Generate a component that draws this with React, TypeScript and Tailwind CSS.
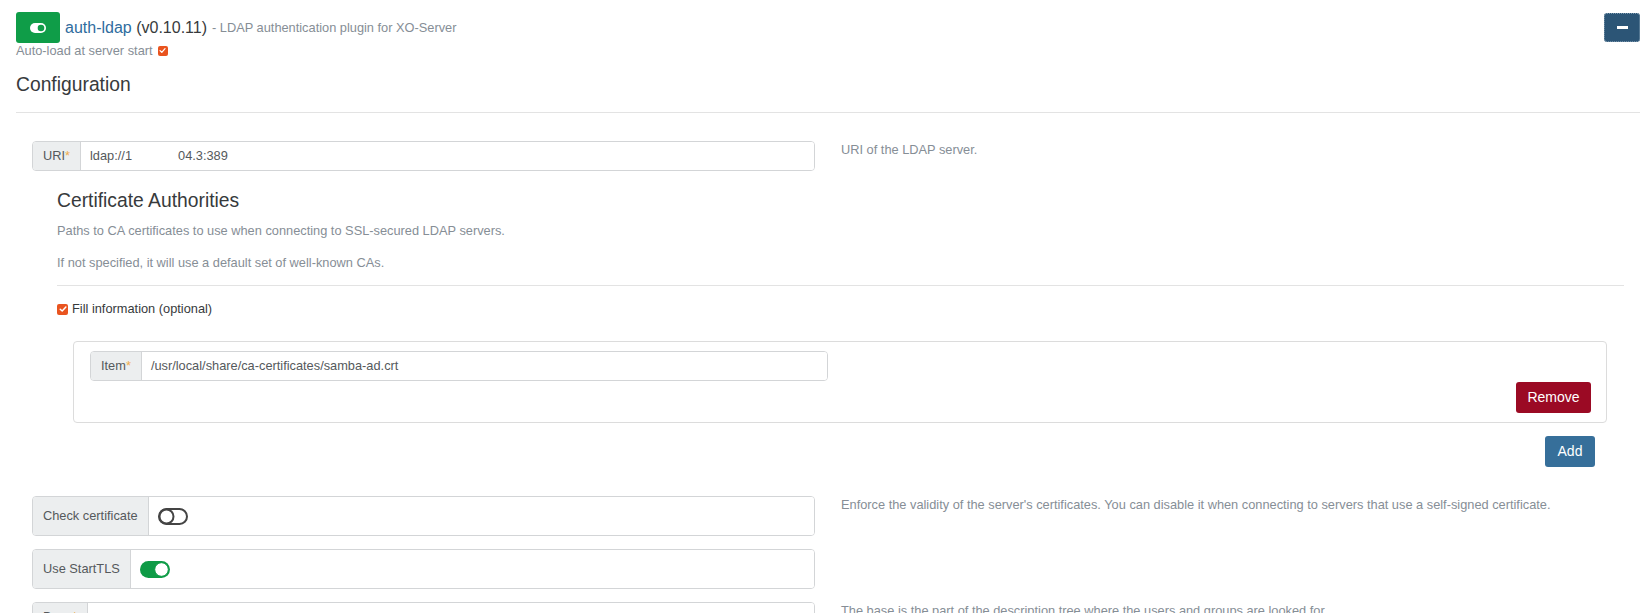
import React from 'react';

const muted = 'text-[#868e96]';

const Check = ({ size }: { size: number }) => (
  <span
    className="inline-flex items-center justify-center rounded-[2px] bg-[#e9541f]"
    style={{ width: size, height: size }}
  >
    <svg width={size - 3} height={size - 3} viewBox="0 0 10 10">
      <path d="M1.5 5.2 L4 7.6 L8.6 2.4" fill="none" stroke="#fff" strokeWidth="1.8" strokeLinecap="round" strokeLinejoin="round" />
    </svg>
  </span>
);

const ToggleOff = () => (
  <svg width="30" height="17" viewBox="0 0 30 17">
    <rect x="1" y="1" width="28" height="15" rx="7.5" fill="#fff" stroke="#444" strokeWidth="2" />
    <circle cx="8.5" cy="8.5" r="7" fill="#fff" stroke="#444" strokeWidth="2" />
  </svg>
);

const ToggleOn = () => (
  <svg width="30" height="17" viewBox="0 0 30 17">
    <rect x="0" y="0" width="30" height="17" rx="8.5" fill="#0e9b46" />
    <circle cx="21.5" cy="8.5" r="6.8" fill="#fff" stroke="#0e9b46" strokeWidth="1" />
  </svg>
);

const Group = ({
  label,
  required,
  tall,
  width,
  children,
}: {
  label: string;
  required?: boolean;
  tall?: boolean;
  width: string;
  children?: React.ReactNode;
}) => (
  <div className={`flex border border-[#d3d5d7] rounded-[4px] overflow-hidden ${tall ? 'h-[40px]' : 'h-[30px]'} ${width}`}>
    <div className="flex items-center px-[10px] bg-[#eceeef] border-r border-[#d3d5d7] text-[#55595c] whitespace-nowrap">
      {label}
      {required && <span className="text-[#f0ad4e]">*</span>}
    </div>
    <div className="flex-1 flex items-center px-[9px] text-[#55595c] bg-white">{children}</div>
  </div>
);

const Row = ({ left, desc }: { left: React.ReactNode; desc?: string }) => (
  <div className="grid grid-cols-[783px_1fr] gap-x-[26px]">
    <div>{left}</div>
    <div className={`${muted} leading-[18px]`}>{desc}</div>
  </div>
);

export default function App() {
  return (
    <div className="min-h-screen bg-white pl-[16px] pr-[6px] pt-[12px] font-['Liberation_Sans',Arial,sans-serif] text-[12.8px] text-[#333]">
      <div className="flex items-start justify-between">
        <div>
          <div className="flex items-center h-[31px]">
            <button className="w-[44px] h-[31px] rounded-[3px] bg-[#0f9d48] flex items-center justify-center">
              <svg width="16" height="10" viewBox="0 0 16 10">
                <rect x="0" y="0" width="16" height="10" rx="5" fill="#fff" />
                <circle cx="11" cy="5" r="3.3" fill="#0f9d48" />
              </svg>
            </button>
            <span className="ml-[5px] text-[16px] leading-[20px] text-[#373a3c]">
              <span className="text-[#2f6c9e]">auth-ldap</span> (v0.10.11)
            </span>
            <span className={`ml-[5px] ${muted}`}>- LDAP authentication plugin for XO-Server</span>
          </div>
          <div className={`flex items-center leading-[15px] ${muted}`}>
            Auto-load at server start
            <span className="ml-[5px] flex">
              <Check size={10} />
            </span>
          </div>
        </div>
        <button className="mt-[1px] w-[36px] h-[29px] rounded-[3px] bg-[#2c5576] border border-dotted border-[#7f9bb0] flex items-center justify-center">
          <span className="block w-[11px] h-[3px] bg-white" />
        </button>
      </div>

      <div className="mt-[15px] text-[19.3px] leading-[23px] text-[#373a3c]">Configuration</div>
      <div className="mt-[16px] border-t border-[#e3e3e3]" />

      <div className="pl-[16px] mt-[28px]">
        <Row
          left={
            <Group label="URI" required width="w-[783px]">
              ldap://1<span className="inline-block w-[46px]" />04.3:389
            </Group>
          }
          desc="URI of the LDAP server."
        />

        <div className="ml-[25px] mr-[16px] mt-[18px]">
          <div className="text-[19.3px] leading-[23px] text-[#373a3c]">Certificate Authorities</div>
          <p className={`mt-[9px] leading-[20px] ${muted}`}>
            Paths to CA certificates to use when connecting to SSL-secured LDAP servers.
          </p>
          <p className={`mt-[12px] leading-[20px] ${muted}`}>If not specified, it will use a default set of well-known CAs.</p>
          <div className="mt-[12px] border-t border-[#e3e3e3]" />
          <div className="mt-[13px] flex items-center leading-[20px] text-[#373a3c]">
            <Check size={11} />
            <span className="ml-[4px]">Fill information (optional)</span>
          </div>

          <div className="mt-[22px] ml-[16px] mr-[17px] border border-[#dcdcdc] rounded-[4px] pl-[16px] pr-[15px] pt-[9px] pb-[9px]">
            <Group label="Item" required width="w-[738px]">
              /usr/local/share/ca-certificates/samba-ad.crt
            </Group>
            <div className="mt-[1px] flex justify-end">
              <button className="w-[75px] h-[31px] rounded-[3px] bg-[#9b0a24] text-white text-[14px]">Remove</button>
            </div>
          </div>

          <div className="mt-[13px] flex justify-end pr-[29px]">
            <button className="w-[50px] h-[31px] rounded-[3px] bg-[#366f9a] text-white text-[14px]">Add</button>
          </div>
        </div>

        <div className="mt-[29px]">
          <Row
            left={
              <Group label="Check certificate" tall width="w-[783px]">
                <ToggleOff />
              </Group>
            }
            desc="Enforce the validity of the server's certificates. You can disable it when connecting to servers that use a self-signed certificate."
          />
        </div>
        <div className="mt-[13px]">
          <Row
            left={
              <Group label="Use StartTLS" tall width="w-[783px]">
                <ToggleOn />
              </Group>
            }
          />
        </div>
        <div className="mt-[13px] pb-[20px]">
          <Row
            left={<Group label="Base" required width="w-[783px]" />}
            desc="The base is the part of the description tree where the users and groups are looked for."
          />
        </div>
      </div>
    </div>
  );
}
